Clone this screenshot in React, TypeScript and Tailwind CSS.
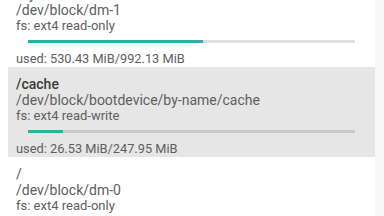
import type { CSSProperties } from 'react'

type Mount = {
  title: string
  device: string
  fs: string
  used: string
  ratio: number
  selected?: boolean
}

const MOUNTS: Mount[] = [
  {
    title: '/system',
    device: '/dev/block/dm-1',
    fs: 'fs: ext4 read-only',
    used: 'used: 530.43 MiB/992.13 MiB',
    ratio: 530.43 / 992.13,
  },
  {
    title: '/cache',
    device: '/dev/block/bootdevice/by-name/cache',
    fs: 'fs: ext4 read-write',
    used: 'used: 26.53 MiB/247.95 MiB',
    ratio: 26.53 / 247.95,
    selected: true,
  },
  {
    title: '/',
    device: '/dev/block/dm-0',
    fs: 'fs: ext4 read-only',
    used: 'used: 1.21 GiB/2.45 GiB',
    ratio: 0.49,
  },
]

function MountRow({ mount }: { mount: Mount }) {
  const fill: CSSProperties = { width: `${mount.ratio * 100}%` }
  return (
    <div className={`h-[90px] pt-2 ${mount.selected ? 'bg-[#e6e6e6]' : ''}`}>
      <div
        className={`pl-2 text-[14px] leading-[18px] ${
          mount.selected ? 'font-medium text-[#3a3a3a]' : 'text-[#555]'
        }`}
      >
        {mount.title}
      </div>
      <div className="pl-2 text-[14px] leading-[15px] text-[#5e5e5e]">{mount.device}</div>
      <div className="pl-2 text-[13px] leading-[15px] text-[#5e5e5e]">{mount.fs}</div>
      <div className="mx-5 mt-[7px] h-[3px] bg-black/[0.12]">
        <div className="h-full bg-[#26b3a3]" style={fill} />
      </div>
      <div className="pl-2 mt-2 text-[12.8px] leading-4 text-[#5e5e5e]">{mount.used}</div>
    </div>
  )
}

export default function App() {
  return (
    <div
      className="flex h-[216px] w-[384px] overflow-hidden bg-white"
      style={{ fontFamily: 'Roboto, "Noto Sans", sans-serif' }}
    >
      <div className="flex-1 pl-2">
        <div className="-mt-[23px]">
          {MOUNTS.map((m) => (
            <MountRow key={m.device} mount={m} />
          ))}
        </div>
      </div>
      <div className="w-[9px] bg-[#f8f8f8]" />
    </div>
  )
}
